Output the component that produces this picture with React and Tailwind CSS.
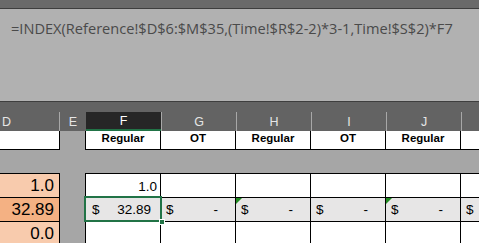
import React from "react";

const cols = ["G", "H", "I", "J"];

function HeaderRow() {
  return (
    <div className="flex h-[19px] bg-[#636363] text-[12.5px] leading-[19px] text-[#e6e6e6]">
      <div className="w-[60px] shrink-0 border-r border-[#a8a8a8] pl-[2px] pt-[1px]">D</div>
      <div className="w-[26px] shrink-0 text-center pt-[1px]">E</div>
      <div className="w-[75px] shrink-0 bg-[#262626] border-b-2 border-[#217346] text-center text-white pt-[1px] leading-[17px]">F</div>
      {cols.map((c) => (
        <div key={c} className="w-[75px] shrink-0 border-l border-[#a8a8a8] text-center pt-[1px]">{c}</div>
      ))}
      <div className="flex-1 border-l border-[#a8a8a8]" />
    </div>
  );
}

function LabelRow() {
  const labels = ["Regular", "OT", "Regular", "OT", "Regular"];
  return (
    <div className="flex h-[19px] bg-[#a6a6a6] font-bold text-[11.5px] leading-[14px] text-black">
      <div className="w-[60px] shrink-0 bg-white border-r border-b border-black" />
      <div className="w-[25px] shrink-0" />
      {labels.map((l, i) => (
        <div key={i} className={`shrink-0 bg-white border-r border-b border-black text-center ${i === 0 ? "border-l w-[76px]" : "w-[75px]"}`}>{l}</div>
      ))}
      <div className="flex-1 bg-white border-b border-black" />
    </div>
  );
}

function Tri() {
  return <div className="absolute left-0 top-0 w-0 h-0 border-t-[6px] border-r-[6px] border-t-[#1f8a1f] border-r-transparent" />;
}

export default function App() {
  return (
    <div className="relative w-[479px] h-[243px] overflow-hidden bg-[#a6a6a6]" style={{ fontFamily: '"Liberation Sans", Arial, sans-serif' }}>
      <div className="h-[9px] bg-[#6a6a6a] border-b border-[#3e3e3e]" />
      <div className="h-[93px] bg-[#b1b1b1] border-b border-[#3e3e3e] pl-[11px] pt-[9px] text-[14.6px] leading-[20px] text-[#4a4a4a]" style={{ fontFamily: '"Open Sans", sans-serif' }}>
        =INDEX(Reference!$D$6:$M$35,(Time!$R$2-2)*3-1,Time!$S$2)*F7
      </div>
      <div className="h-[10px] bg-[#636363]" />
      <HeaderRow />
      <LabelRow />
      <div className="h-[23px]" />
      {/* Row 1 */}
      <div className="flex h-[24px] text-black">
        <div className="w-[60px] shrink-0 bg-[#f8cbad] border-t border-r border-black text-right pr-[5px] text-[17px] leading-[24px]">1.0</div>
        <div className="w-[25px] shrink-0" />
        <div className="w-[76px] shrink-0 bg-white border-t border-l border-r border-black text-right pr-[3px] text-[13.5px] leading-[26px]">1.0</div>
        {cols.map((c) => (
          <div key={c} className="w-[75px] shrink-0 bg-white border-t border-r border-black" />
        ))}
        <div className="flex-1 bg-white border-t border-black" />
      </div>
      {/* Row 2 */}
      <div className="flex h-[24px] text-black text-[13.5px] leading-[24px]">
        <div className="w-[60px] shrink-0 bg-[#f4b183] border-t border-r border-black text-right pr-[5px] text-[17px]">32.89</div>
        <div className="w-[25px] shrink-0" />
        <div className="w-[76px] shrink-0 bg-[#e7e6e6] border-t border-l border-r border-black flex justify-between pl-[6px] pr-[9px]">
          <span>$</span><span>32.89</span>
        </div>
        {cols.map((c, i) => (
          <div key={c} className="relative w-[75px] shrink-0 bg-[#e7e6e6] border-t border-r border-black flex justify-between pl-[5px] pr-[17px]">
            {(i === 1 || i === 3) && <Tri />}
            <span>$</span><span>-</span>
          </div>
        ))}
        <div className="flex-1 bg-[#e7e6e6] border-t border-black pl-[5px]">$</div>
      </div>
      {/* Row 3 */}
      <div className="flex h-[24px] text-black">
        <div className="w-[60px] shrink-0 bg-[#f8cbad] border-t border-r border-black text-right pr-[5px] text-[17px] leading-[24px]">0.0</div>
        <div className="w-[25px] shrink-0" />
        <div className="w-[76px] shrink-0 bg-white border-t border-l border-r border-black" />
        {cols.map((c) => (
          <div key={c} className="w-[75px] shrink-0 bg-white border-t border-r border-black" />
        ))}
        <div className="flex-1 bg-white border-t border-black" />
      </div>
      {/* selection overlay */}
      <div className="absolute left-[84px] top-[196px] w-[78px] h-[26px] border-2 border-[#217346]" />
      <div className="absolute left-[159px] top-[219px] w-[6px] h-[6px] bg-[#217346] border border-white" />
    </div>
  );
}
